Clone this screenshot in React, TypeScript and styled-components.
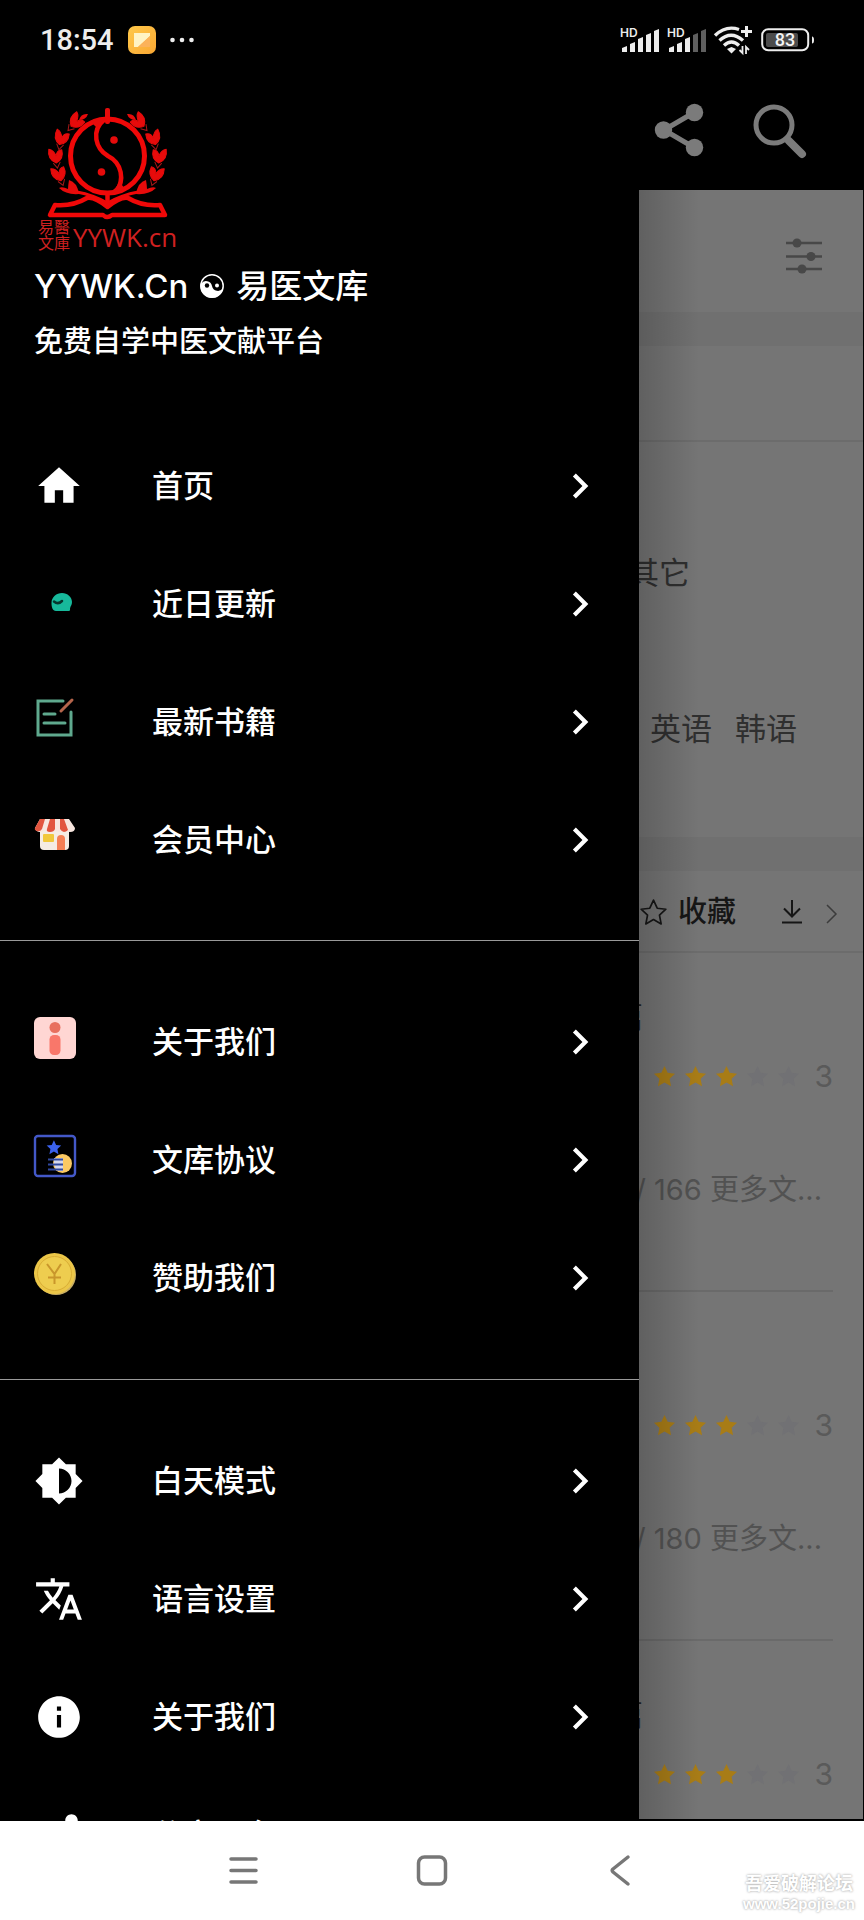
import React from "react";
import styled, { createGlobalStyle } from "styled-components";

const GlobalStyle = createGlobalStyle`
  *, *::before, *::after { box-sizing: border-box; }
  body {
    margin: 0;
    background: #000;
    font-family: Inter, "Noto Sans CJK SC", sans-serif;
  }
  button { border: 0; padding: 0; background: none; font: inherit; color: inherit; cursor: pointer; }
  a { color: inherit; text-decoration: none; }
  ul { list-style: none; margin: 0; padding: 0; }
  h1, h2, p { margin: 0; font-weight: inherit; }
  svg { display: block; flex: none; overflow: visible; }
`;

const Screen = styled.div`
  display: flex;
  flex-direction: column;
  height: 100vh;
`;

/* ---------- status bar ---------- */

const StatusBar = styled.header`
  display: flex;
  align-items: center;
  justify-content: space-between;
  flex: none;
  height: 80px;
  padding: 0 49px 0 40px;
  color: #ededed;
`;

const StatusGroup = styled.div<{ $gap: number }>`
  display: flex;
  align-items: center;
  gap: ${(p) => p.$gap}px;
`;

const Clock = styled.time`
  font-family: Roboto, sans-serif;
  font-size: 29px;
  line-height: 32px;
  font-weight: 500;
`;

/* ---------- page behind the drawer ---------- */

const Stage = styled.div`
  position: relative;
  flex: 1;
  min-height: 0;
  overflow: hidden;
`;

const Page = styled.main`
  display: flex;
  flex-direction: column;
  height: 100%;
  padding: 0 1px 2px 0;
`;

const AppBar = styled.div`
  display: flex;
  flex: none;
  justify-content: flex-end;
  align-items: center;
  gap: 49px;
  height: 110px;
  padding: 0 56px 10px 0;
  color: #7b7b7b;
`;

const PageBody = styled.div`
  flex: 1;
  min-height: 0;
  overflow: hidden;
  background: #757575;
  color: #2f2f2f;
`;

const FilterRow = styled.div`
  display: flex;
  justify-content: flex-end;
  align-items: center;
  height: 122px;
  padding: 10px 41px 0 0;
  color: #484848;
`;

const Band = styled.div`
  height: 34px;
  background: #707070;
`;

const TabStrip = styled.div`
  height: 96px;
  border-bottom: 2px solid #6c6c6c;
`;

const Options = styled.div`
  display: flex;
  flex-direction: column;
  gap: 110px;
  padding: 108px 66px 85px 0;
  font-size: 31px;
  line-height: 46px;
`;

const OptionLine = styled.div<{ $inset?: number }>`
  display: flex;
  justify-content: flex-end;
  gap: 23px;
  padding-right: ${(p) => p.$inset ?? 0}px;
`;

const Tools = styled.div`
  display: flex;
  justify-content: flex-end;
  align-items: center;
  height: 82px;
  padding: 2px 25px 0 0;
  border-bottom: 2px solid #6c6c6c;
  color: #161616;
`;

const FavButton = styled.button`
  display: flex;
  align-items: center;
  gap: 11px;
  margin-right: 45px;
  font-size: 29px;
  line-height: 40px;
  font-weight: 500;
`;

const IconButton = styled.button<{ $mr?: number }>`
  margin-right: ${(p) => p.$mr ?? 0}px;
`;

const Books = styled.ul`
  margin-top: -10px;
`;

const Book = styled.li`
  height: 349px;
  margin-right: 30px;
  padding-top: 54px;
  border-bottom: 2px solid #6a6a6a;
  text-align: right;
`;

const BookTitle = styled.h2`
  height: 40px;
  padding-right: 190px;
  font-size: 31px;
  line-height: 40px;
  color: #222;
`;

const Rating = styled.div`
  display: flex;
  justify-content: flex-end;
  align-items: center;
  gap: 8px;
  height: 40px;
  margin-top: 19px;
  font-size: 30px;
  color: #5a5a5a;
`;

const Score = styled.span`
  margin-left: 6px;
`;

const Meta = styled.p`
  margin-top: 74px;
  padding-right: 11px;
  font-size: 29px;
  line-height: 40px;
  color: #525252;
`;

/* ---------- drawer ---------- */

const Drawer = styled.aside`
  position: absolute;
  inset: 0 26% 0 0;
  overflow: hidden;
  background: #000;
  color: #fff;
`;

const DrawerShade = styled.div`
  position: absolute;
  top: 110px;
  bottom: 2px;
  left: 74%;
  width: 60px;
  background: linear-gradient(90deg, rgba(0, 0, 0, 0.18), rgba(0, 0, 0, 0));
`;

const DrawerHead = styled.div`
  padding: 24px 34px 0;
`;

const SiteName = styled.h1`
  display: flex;
  align-items: center;
  gap: 12px;
  margin-top: 10px;
  font-size: 33px;
  line-height: 48px;
  font-weight: 500;
`;

const Tagline = styled.p`
  margin: 10px 0 63px;
  font-size: 29px;
  line-height: 44px;
  font-weight: 500;
`;

const MenuGroup = styled.ul`
  padding: 42px 0;
  & + & { border-top: 1px solid #9a9a9a; }
  &:first-of-type { padding: 0 0 41px; }
`;

const MenuLink = styled.a`
  display: flex;
  align-items: center;
  height: 118px;
  padding: 0 34px;
`;

const IconSlot = styled.span<{ $picture?: boolean }>`
  width: 118px;
  padding-bottom: ${(p) => (p.$picture ? 8 : 0)}px;
`;

const MenuLabel = styled.span`
  flex: 1;
  font-size: 31px;
  line-height: 46px;
  font-weight: 500;
`;

/* ---------- system navigation ---------- */

const NavBar = styled.nav`
  position: relative;
  display: flex;
  flex: none;
  justify-content: center;
  align-items: center;
  gap: 148px;
  height: 99px;
  background: #fff;
  color: #777;
`;

const Watermark = styled.div`
  position: absolute;
  right: 9px;
  bottom: 7px;
  text-align: center;
  color: #fff;
  font-size: 18px;
  line-height: 22px;
  font-weight: 700;
  text-shadow: 0 0 2px #b4b4b4, 0 0 3px #c4c4c4;
`;

const WatermarkUrl = styled.div`
  font-family: "Liberation Sans", sans-serif;
  font-size: 15px;
  line-height: 18px;
`;

/* ---------- drawings ---------- */

const Solid = ({ d }: { d: string }) => (
  <svg width="50" height="50" viewBox="0 0 24 24" fill="currentColor"><path d={d} /></svg>
);

const Chevron = () => <Solid d="M10 6 8.59 7.41 13.17 12l-4.58 4.59L10 18l6-6z" />;

const TaijiIcon = () => (
  <svg width="24" height="24" viewBox="0 0 24 24">
    <circle cx="12" cy="12" r="11.200" fill="none" stroke="#fff" strokeWidth="1.500" />
    <path d="M1 10a6 6 0 0 1 11 2 6 6 0 0 0 11 2A11.200 11.200 0 1 1 1 10z" fill="#fff" />
    <circle cx="7" cy="11.500" r="2.200" fill="#000" /><circle cx="17" cy="11.500" r="2" fill="#fff" />
  </svg>
);

const NoteIcon = () => (
  <svg width="28" height="28" viewBox="0 0 28 28">
    <defs>
      <linearGradient id="note" x1="0" y1="0" x2="1" y2="1"><stop offset="0" stopColor="#ffc94a" /><stop offset="1" stopColor="#f9a733" /></linearGradient>
    </defs>
    <rect width="28" height="28" rx="7" fill="url(#note)" />
    <path d="M6 7h16v3L10 21H6z" fill="#fff3c4" />
    <path d="M22 10v11H10z" fill="#fbb25a" />
  </svg>
);

const Dots = () => (
  <svg width="26" height="6" viewBox="0 0 26 6" fill="#ededed"><circle cx="2.500" cy="3" r="2.300" /><circle cx="12" cy="3" r="2.300" /><circle cx="21.500" cy="3" r="2.300" /></svg>
);

const Signal = ({ level }: { level: number }) => (
  <svg width="38" height="26" viewBox="0 0 38 26" fill="#ededed">
    <text x="0" y="10" fontFamily="Inter, sans-serif" fontSize="12" fontWeight="600">HD</text>
    {[6, 10, 15, 19, 23].map((h, i) => (
      <path key={h} opacity={i < level ? 1 : 0.4} d={`M${2 + i * 8} 25v-${h - 2}l5-2v${h}z`} />
    ))}
  </svg>
);

const Wifi = () => (
  <svg width="38" height="28" viewBox="0 0 38 28" fill="none" stroke="#ededed" strokeWidth="3.400">
    <path d="M1 9.500Q12 -1 25 3.500" /><path d="M5.500 14.500Q17 4 29 14.500" /><path d="M10 19.500Q17.500 12.500 25 19.500" />
    <path d="m13 23 4.500-2 4.500 2-4.500 4.500z" fill="#ededed" stroke="none" />
    <path d="M32.500 0v11M27 5.500h11" strokeWidth="3" />
    <path d="M28.500 20v7l-3-3M32 28v-7l3 3" strokeWidth="1.800" />
  </svg>
);

const Battery = () => (
  <svg width="54" height="24" viewBox="0 0 54 24">
    <rect x="1.200" y="1.200" width="46" height="21" rx="6" fill="none" stroke="#ededed" strokeWidth="2" />
    <rect x="5" y="5" width="32" height="14" rx="2" fill="#4c4c4c" />
    <path d="M51 8.500q2 0 2 3.500t-2 3.500z" fill="#ededed" />
    <text x="24" y="18.200" textAnchor="middle" fontFamily="Roboto, sans-serif" fontSize="18" fontWeight="500" fill="#f4f4f4">83</text>
  </svg>
);

const ShareIcon = () => (
  <svg width="50" height="54" viewBox="0 0 50 54" fill="currentColor">
    <path d="M40 9.500 10 27l30 17.500" fill="none" stroke="currentColor" strokeWidth="5" />
    <circle cx="40.500" cy="9.500" r="8.700" /><circle cx="9.500" cy="27" r="8.700" /><circle cx="40.500" cy="44.500" r="8.700" />
  </svg>
);

const SearchIcon = () => (
  <svg width="54" height="54" viewBox="0 0 54 54" fill="none" stroke="currentColor">
    <circle cx="21" cy="22" r="18" strokeWidth="5" />
    <path d="M36 38 49 51" strokeWidth="8" strokeLinecap="round" /><path d="m33 34 5 5" strokeWidth="5" />
  </svg>
);

const SlidersIcon = () => (
  <svg width="36" height="36" viewBox="0 0 36 36" fill="currentColor" stroke="currentColor">
    <path d="M0 5h36M0 18.500h36M0 31h36" strokeWidth="2.500" />
    <g stroke="none"><circle cx="11" cy="5" r="4.500" /><circle cx="25" cy="18.500" r="4.500" /><circle cx="16" cy="31" r="4.500" /></g>
  </svg>
);

const STAR = "M12 1l3.300 7.200 7.700.9-5.700 5.300 1.500 7.800L12 18.300l-6.800 3.900 1.500-7.800L1 9.100l7.700-.9z";

const Star = ({ on }: { on: boolean }) => (
  <svg width="23" height="23" viewBox="0 0 24 24"><path d={STAR} fill={on ? "#a87c16" : "#717174"} /></svg>
);

const StarOutline = () => (
  <svg width="27" height="27" viewBox="0 0 24 24" fill="none" stroke="currentColor" strokeWidth="1.500" strokeLinejoin="round"><path d={STAR} /></svg>
);

const DownloadIcon = () => (
  <svg width="22" height="24" viewBox="0 0 22 24" fill="none" stroke="currentColor" strokeWidth="2"><path d="M11 0v16M3 8.500l8 8 8-8M1 22.500h20" /></svg>
);

const ThinChevron = () => (
  <svg width="12" height="24" viewBox="0 0 12 24" fill="none" stroke="#3c3c3c" strokeWidth="1.500"><path d="m1 5 9 9-9 9" /></svg>
);

const TealIcon = () => (
  <svg width="42" height="42" viewBox="0 0 42 42">
    <path d="M17.500 24c0-6 5-10 10.500-10s10 4 10 9c0 3-1.500 4-2 6.500.2 1.500 0 2.500-1 2.500H22c-3.500 0-4.500-4-4.500-8z" fill="#17b99b" />
    <path d="M20 22.500q4 3.500 8-.5" fill="none" stroke="#06362e" strokeWidth="2.500" strokeLinecap="round" />
  </svg>
);

const EditIcon = () => (
  <svg width="42" height="42" viewBox="0 0 42 42" fill="none" stroke="#5fa98e" strokeWidth="3" strokeLinecap="round">
    <path d="M29 4H4v34h33V15" /><path d="M10 17h11M10 26h21" /><path d="M27 14 38 3" stroke="#b5654c" strokeWidth="3" />
  </svg>
);

const ShopIcon = () => (
  <svg width="42" height="42" viewBox="0 0 42 42">
    <path d="M6 13h29v18q0 4-4 4H10q-4 0-4-4z" fill="#f5ece4" />
    <path d="M6 4h29l6 9q0 4-5 4t-5-3q-1 3-5.500 3T21 14q-1 3-5 3t-5-3q-1 3-5 3t-5-4z" fill="#f8e6df" />
    <path d="M6 4h5l-3 10q-2 3-5 2t-2-3zM16 4h5v10q-1 3-5 3t-3-3zM26 4h4l4 11q-2 2-4 2t-4-3z" fill="#e2553f" />
    <rect x="9" y="19" width="11" height="8" rx="1" fill="#f1c83c" />
    <path d="M23 35V24q0-4 4-4t4 4v11z" fill="#f57f55" />
  </svg>
);

const PinkInfoIcon = () => (
  <svg width="42" height="42" viewBox="0 0 42 42">
    <rect width="42" height="42" rx="6" fill="#ffd6d3" />
    <circle cx="21" cy="10.500" r="5.500" fill="#e86f5e" /><rect x="15.500" y="18" width="11" height="20" rx="4.500" fill="#f9776a" />
  </svg>
);

const PactIcon = () => (
  <svg width="42" height="42" viewBox="0 0 42 42">
    <rect x="1" y="1" width="40" height="40" rx="3" fill="none" stroke="#4358c8" strokeWidth="2.400" />
    <path transform="translate(12 4.500) scale(.66)" d={STAR} fill="#3b62ee" />
    <circle cx="28.500" cy="28.500" r="9.500" fill="#fbc963" />
    <path d="M20 23h9v13h-5q-5-4-4-13z" fill="#d5d8ec" />
    <path d="M14 24.500h15M14 29.500h15M14 34.500h15" stroke="#30499f" strokeWidth="1.800" />
  </svg>
);

const CoinIcon = () => (
  <svg width="42" height="42" viewBox="0 0 42 42">
    <circle cx="22" cy="22" r="20" fill="#c9ae62" /><circle cx="20.500" cy="20.500" r="20.500" fill="#ebc648" />
    <circle cx="20.500" cy="20.500" r="17" fill="#eecd4f" stroke="#d9ad35" strokeWidth="1" />
    <path d="m13 11 7.500 10L27 11M20.500 21v10M14 24.500h13" fill="none" stroke="#c9962b" strokeWidth="2" />
  </svg>
);

/* leaf pairs of the right-hand branch: x, y, angle */
const leafPairs = [
  [104, 17, -48], [119, 33, -18], [125, 51, 2], [122, 69, 14],
];

const Wreath = () => (
  <>
    {leafPairs.map(([x, y, a]) => (
      <g key={y} transform={`translate(${x} ${y}) rotate(${a})`}>
        <path d="M0 8Q-8 4-6-5-1-5 0 1 2-5 7-6 9 4 0 8z" stroke="#e60b0b" strokeWidth="1" strokeLinejoin="round" />
        <path d="M-4 7l3 6 4-5" fill="none" stroke="#a81818" strokeWidth="1" />
      </g>
    ))}
    <path d="M93 10q7-1 9 6-7 0-9-6z" />
    <path d="M102 90q2-12 10-14 1 6 1 9 6-3 9-1-7 7-20 6z" />
  </>
);

const Logo = () => (
  <svg width="146" height="148" viewBox="0 0 146 148" role="img" aria-label="易醫文庫 YYWK.cn" fill="#e60b0b">
    <rect x="71" y="4" width="5" height="16" rx="2" />
    <circle cx="73.500" cy="52" r="37" fill="none" stroke="#f00808" strokeWidth="5" />
    <path d="M71 15c-15 12-9 30 3 37 14 7 17 24 8 36" fill="none" stroke="#f00808" strokeWidth="4.500" />
    <path d="M56 17q10-4 17-2-8 4-9 10zM91 85q-8 5-17 4 9-4 11-12z" />
    <circle cx="80" cy="36" r="3.800" /><circle cx="67.500" cy="68" r="3.800" />
    <Wreath />
    <g transform="matrix(-1 0 0 1 147 0)"><Wreath /></g>
    <path d="M43 88q16 3 30.500 11 14.500-8 30.500-11" fill="none" stroke="#f00808" strokeWidth="3" />
    <path d="M73.500 88v15M73.500 103C66 97 58 93 53 94 43 100 33 102 21 101l-5 10h53q4 4 9 0h53l-5-10c-12 1-22-1-32-7-5-1-13 3-20.500 9z" fill="none" stroke="#f00808" strokeWidth="4.500" strokeLinejoin="round" />
    <g fill="#d02020">
      <text x="4" y="129" fontFamily="'Noto Sans CJK TC', sans-serif" fontSize="16">易醫</text>
      <text x="4" y="145" fontFamily="'Noto Sans CJK TC', sans-serif" fontSize="16">文庫</text>
      <text x="39" y="143" fontFamily="'Open Sans', sans-serif" fontSize="26">YYWK.cn</text>
    </g>
  </svg>
);

/* ---------- data ---------- */

type Entry = { label: string; icon: React.ReactNode; picture?: boolean };

const groups: Entry[][] = [
  [
    { label: "首页", icon: <Solid d="M10 20v-6h4v6h5v-8h3L12 3 2 12h3v8z" /> },
    { label: "近日更新", icon: <TealIcon />, picture: true },
    { label: "最新书籍", icon: <EditIcon />, picture: true },
    { label: "会员中心", icon: <ShopIcon />, picture: true },
  ],
  [
    { label: "关于我们", icon: <PinkInfoIcon />, picture: true },
    { label: "文库协议", icon: <PactIcon />, picture: true },
    { label: "赞助我们", icon: <CoinIcon />, picture: true },
  ],
  [
    { label: "白天模式", icon: <Solid d="M20 15.310 23.310 12 20 8.690V4h-4.690L12 .690 8.690 4H4v4.690L.690 12 4 15.310V20h4.690L12 23.310 15.310 20H20v-4.690zM12 18V6c3.310 0 6 2.690 6 6s-2.690 6-6 6z" /> },
    { label: "语言设置", icon: <Solid d="M12.870 15.070l-2.540-2.510.03-.03A17.520 17.520 0 0 0 14.070 6H17V4h-7V2H8v2H1v1.990h11.170C11.500 7.920 10.440 9.750 9 11.350 8.070 10.320 7.300 9.190 6.690 8h-2c.73 1.630 1.730 3.170 2.980 4.560l-5.090 5.020L4 19l5-5 3.110 3.110.760-2.040zM18.500 10h-2L12 22h2l1.120-3h4.750L21 22h2l-4.500-12zm-2.620 7l1.620-4.330L19.120 17h-3.240z" /> },
    { label: "关于我们", icon: <Solid d="M12 2C6.480 2 2 6.480 2 12s4.480 10 10 10 10-4.480 10-10S17.520 2 12 2zm1 15h-2v-6h2v6zm0-8h-2V7h2v2z" /> },
    { label: "分享平台", icon: <Solid d="M18 16.080c-.76 0-1.440.3-1.960.770L8.910 12.700c.05-.23.090-.46.090-.7s-.04-.47-.09-.7l7.050-4.110c.54.5 1.250.810 2.040.810 1.660 0 3-1.340 3-3s-1.340-3-3-3-3 1.340-3 3c0 .24.040.470.090.700L8.040 9.810C7.500 9.310 6.790 9 6 9c-1.660 0-3 1.340-3 3s1.340 3 3 3c.79 0 1.500-.31 2.040-.81l7.120 4.160c-.05.210-.08.430-.08.650 0 1.610 1.310 2.920 2.920 2.920s2.920-1.310 2.920-2.920-1.310-2.920-2.920-2.920z" /> },
  ],
];

const books = [
  { title: "篇", meta: "/ 166 更多文..." },
  { title: "", meta: "/ 180 更多文..." },
  { title: "篇", meta: "" },
];

export default function App() {
  return (
    <>
      <GlobalStyle />
      <Screen>
        <StatusBar>
          <StatusGroup $gap={14}>
            <Clock>18:54</Clock>
            <NoteIcon />
            <Dots />
          </StatusGroup>
          <StatusGroup $gap={9}>
            <Signal level={5} />
            <Signal level={3} />
            <Wifi />
            <Battery />
          </StatusGroup>
        </StatusBar>

        <Stage>
          <Page>
            <AppBar>
              <IconButton aria-label="分享"><ShareIcon /></IconButton>
              <IconButton aria-label="搜索"><SearchIcon /></IconButton>
            </AppBar>
            <PageBody>
              <FilterRow><IconButton aria-label="筛选"><SlidersIcon /></IconButton></FilterRow>
              <Band />
              <TabStrip />
              <Options>
                <OptionLine $inset={107}><a href="#other">其它</a></OptionLine>
                <OptionLine><a href="#en">英语</a><a href="#ko">韩语</a></OptionLine>
              </Options>
              <Band />
              <Tools>
                <FavButton><StarOutline />收藏</FavButton>
                <IconButton aria-label="下载" $mr={23}><DownloadIcon /></IconButton>
                <IconButton aria-label="更多"><ThinChevron /></IconButton>
              </Tools>
              <Books>
                {books.map((b, i) => (
                  <Book key={i}>
                    <BookTitle>{b.title}</BookTitle>
                    <Rating>
                      {[0, 1, 2, 3, 4].map((n) => <Star key={n} on={n < 3} />)}
                      <Score>3</Score>
                    </Rating>
                    <Meta>{b.meta}</Meta>
                  </Book>
                ))}
              </Books>
            </PageBody>
          </Page>

          <DrawerShade />
          <Drawer>
            <DrawerHead>
              <Logo />
              <SiteName>YYWK.Cn <TaijiIcon /> 易医文库</SiteName>
              <Tagline>免费自学中医文献平台</Tagline>
            </DrawerHead>
            {groups.map((group, g) => (
              <MenuGroup key={g}>
                {group.map((item) => (
                  <li key={item.label}>
                    <MenuLink href="#menu">
                      <IconSlot $picture={item.picture}>{item.icon}</IconSlot>
                      <MenuLabel>{item.label}</MenuLabel>
                      <Chevron />
                    </MenuLink>
                  </li>
                ))}
              </MenuGroup>
            ))}
          </Drawer>
        </Stage>

        <NavBar>
          <IconButton aria-label="菜单">
            <svg width="40" height="40" viewBox="0 0 40 40" stroke="currentColor" strokeWidth="3.500" strokeLinecap="round"><path d="M7 8h25M7 19.500h25M7 31h25" /></svg>
          </IconButton>
          <IconButton aria-label="主页">
            <svg width="40" height="40" viewBox="0 0 40 40" fill="none" stroke="currentColor" strokeWidth="3.500"><rect x="6.500" y="6" width="27" height="27" rx="6" /></svg>
          </IconButton>
          <IconButton aria-label="返回">
            <svg width="40" height="40" viewBox="0 0 40 40" fill="none" stroke="currentColor" strokeWidth="3.500" strokeLinecap="round" strokeLinejoin="round"><path d="M28 6 13 18q-1.500 1.500 0 3L28 33" /></svg>
          </IconButton>
          <Watermark>
            吾爱破解论坛
            <WatermarkUrl>www.52pojie.cn</WatermarkUrl>
          </Watermark>
        </NavBar>
      </Screen>
    </>
  );
}
